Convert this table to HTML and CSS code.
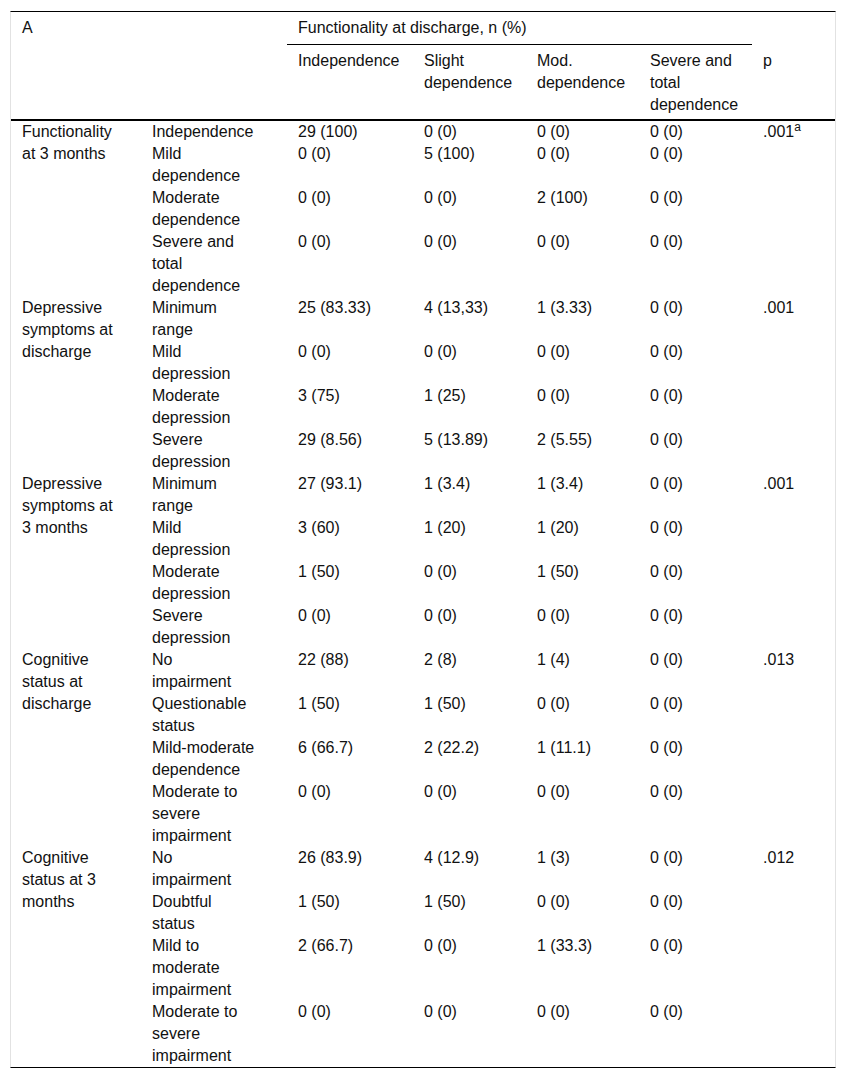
FILE: index.html
```html
<!DOCTYPE html>
<html lang="en">
  <head>
    <meta charset="UTF-8" />
    <meta name="viewport" content="width=device-width, initial-scale=1.0" />
    <title>Functionality table A</title>
    <link rel="stylesheet" href="styles.css">
  </head>

  <body>
    <div class="table-wrap">
      <table class="results">
        <colgroup>
          <col class="col-group">
          <col class="col-level">
          <col class="col-indep">
          <col class="col-num">
          <col class="col-num">
          <col class="col-num">
          <col class="col-p">
        </colgroup>
        <thead>
          <tr>
            <th colspan="2" rowspan="2">A</th>
            <th colspan="4" class="span-head">Functionality at discharge, n (%)</th>
            <th></th>
          </tr>
          <tr class="sub-head">
            <th>Independence</th>
            <th>Slight dependence</th>
            <th>Mod. dependence</th>
            <th>Severe and total dependence</th>
            <th>p</th>
          </tr>
        </thead>
        <tbody>
          <!-- Functionality at 3 months -->
          <tr>
            <td class="group" rowspan="4">Functionality at 3 months</td>
            <td class="level">Independence</td>
            <td>29 (100)</td>
            <td>0 (0)</td>
            <td>0 (0)</td>
            <td>0 (0)</td>
            <td rowspan="4">.001<sup>a</sup></td>
          </tr>
          <tr>
            <td class="level">Mild dependence</td>
            <td>0 (0)</td>
            <td>5 (100)</td>
            <td>0 (0)</td>
            <td>0 (0)</td>
          </tr>
          <tr>
            <td class="level">Moderate dependence</td>
            <td>0 (0)</td>
            <td>0 (0)</td>
            <td>2 (100)</td>
            <td>0 (0)</td>
          </tr>
          <tr>
            <td class="level">Severe and total dependence</td>
            <td>0 (0)</td>
            <td>0 (0)</td>
            <td>0 (0)</td>
            <td>0 (0)</td>
          </tr>

          <!-- Depressive symptoms at discharge -->
          <tr>
            <td class="group" rowspan="4">Depressive symptoms at discharge</td>
            <td class="level">Minimum range</td>
            <td>25 (83.33)</td>
            <td>4 (13,33)</td>
            <td>1 (3.33)</td>
            <td>0 (0)</td>
            <td rowspan="4">.001</td>
          </tr>
          <tr>
            <td class="level">Mild depression</td>
            <td>0 (0)</td>
            <td>0 (0)</td>
            <td>0 (0)</td>
            <td>0 (0)</td>
          </tr>
          <tr>
            <td class="level">Moderate depression</td>
            <td>3 (75)</td>
            <td>1 (25)</td>
            <td>0 (0)</td>
            <td>0 (0)</td>
          </tr>
          <tr>
            <td class="level">Severe depression</td>
            <td>29 (8.56)</td>
            <td>5 (13.89)</td>
            <td>2 (5.55)</td>
            <td>0 (0)</td>
          </tr>

          <!-- Depressive symptoms at 3 months -->
          <tr>
            <td class="group" rowspan="4">Depressive symptoms at 3 months</td>
            <td class="level">Minimum range</td>
            <td>27 (93.1)</td>
            <td>1 (3.4)</td>
            <td>1 (3.4)</td>
            <td>0 (0)</td>
            <td rowspan="4">.001</td>
          </tr>
          <tr>
            <td class="level">Mild depression</td>
            <td>3 (60)</td>
            <td>1 (20)</td>
            <td>1 (20)</td>
            <td>0 (0)</td>
          </tr>
          <tr>
            <td class="level">Moderate depression</td>
            <td>1 (50)</td>
            <td>0 (0)</td>
            <td>1 (50)</td>
            <td>0 (0)</td>
          </tr>
          <tr>
            <td class="level">Severe depression</td>
            <td>0 (0)</td>
            <td>0 (0)</td>
            <td>0 (0)</td>
            <td>0 (0)</td>
          </tr>

          <!-- Cognitive status at discharge -->
          <tr>
            <td class="group" rowspan="4">Cognitive status at discharge</td>
            <td class="level">No impairment</td>
            <td>22 (88)</td>
            <td>2 (8)</td>
            <td>1 (4)</td>
            <td>0 (0)</td>
            <td rowspan="4">.013</td>
          </tr>
          <tr>
            <td class="level">Questionable status</td>
            <td>1 (50)</td>
            <td>1 (50)</td>
            <td>0 (0)</td>
            <td>0 (0)</td>
          </tr>
          <tr>
            <td class="level">Mild-moderate dependence</td>
            <td>6 (66.7)</td>
            <td>2 (22.2)</td>
            <td>1 (11.1)</td>
            <td>0 (0)</td>
          </tr>
          <tr>
            <td class="level">Moderate to severe impairment</td>
            <td>0 (0)</td>
            <td>0 (0)</td>
            <td>0 (0)</td>
            <td>0 (0)</td>
          </tr>

          <!-- Cognitive status at 3 months -->
          <tr>
            <td class="group" rowspan="4">Cognitive status at 3 months</td>
            <td class="level">No impairment</td>
            <td>26 (83.9)</td>
            <td>4 (12.9)</td>
            <td>1 (3)</td>
            <td>0 (0)</td>
            <td rowspan="4">.012</td>
          </tr>
          <tr>
            <td class="level">Doubtful status</td>
            <td>1 (50)</td>
            <td>1 (50)</td>
            <td>0 (0)</td>
            <td>0 (0)</td>
          </tr>
          <tr>
            <td class="level">Mild to moderate impairment</td>
            <td>2 (66.7)</td>
            <td>0 (0)</td>
            <td>1 (33.3)</td>
            <td>0 (0)</td>
          </tr>
          <tr>
            <td class="level">Moderate to severe impairment</td>
            <td>0 (0)</td>
            <td>0 (0)</td>
            <td>0 (0)</td>
            <td>0 (0)</td>
          </tr>
        </tbody>
      </table>
    </div>
  </body>
</html>
```

FILE: styles.css
```css
body {
  margin: 0;
  padding: 11px 10px;
  background-color: #fff;
  color: #111;
  font-family: "Liberation Sans", Arial, Helvetica, sans-serif;
  font-size: 16px;
  line-height: 22px;
}

.table-wrap {
  border-top: 1px solid #000;
  border-bottom: 1px solid #000;
  border-left: 1px solid #e2e2e2;
  border-right: 1px solid #e2e2e2;
}

.results {
  width: 100%;
  table-layout: fixed;
  border-collapse: collapse;
  border-spacing: 0;
}

.col-group {
  width: 130px;
}

.col-level {
  width: 146px;
}

.col-indep {
  width: 126px;
}

.col-num {
  width: 113px;
}

.col-p {
  width: 83px;
}

th,
td {
  padding: 0 8px 0 11px;
  text-align: left;
  vertical-align: top;
}

th {
  font-weight: normal;
}

thead tr:first-child th {
  padding-top: 5px;
  padding-bottom: 5px;
}

.span-head {
  border-bottom: 1px solid #000;
}

.sub-head th {
  padding-top: 5px;
  padding-bottom: 3px;
}

thead {
  border-bottom: 2px solid #000;
}

/* сужаем первые две колонки, чтобы подписи переносились как в оригинале */
.group {
  padding-right: 20px;
}

.level {
  padding-right: 32px;
}

sup {
  font-size: 12px;
  line-height: 0;
  vertical-align: 6px;
}
```
